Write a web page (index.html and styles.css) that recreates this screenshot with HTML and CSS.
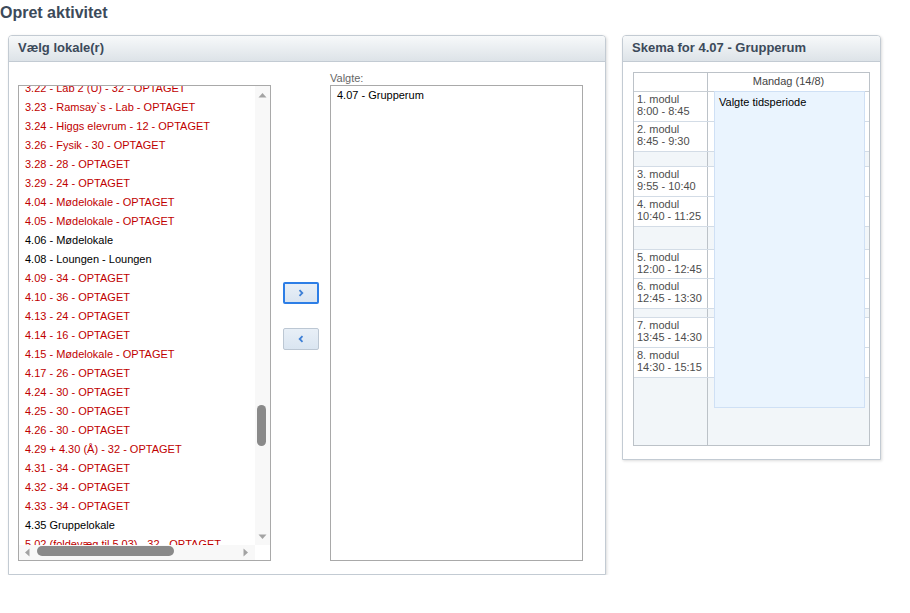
FILE: index.html
```html
<!DOCTYPE html>
<html lang="da">
<head>
<meta charset="utf-8">
<title>Opret aktivitet</title>
<link rel="stylesheet" href="styles.css">
</head>
<body>
<h1 class="page-title">Opret aktivitet</h1>
<div class="panels">
  <section class="panel panel-rooms">
    <header class="panel-head">Vælg lokale(r)</header>
    <div class="panel-body rooms-body">
      <div class="listbox listbox-all">
        <div class="list-view">
          <ul class="list-items list-scrolled">
            <li class="busy">3.22 - Lab 2 (U) - 32 - OPTAGET</li>
            <li class="busy">3.23 - Ramsay`s - Lab - OPTAGET</li>
            <li class="busy">3.24 - Higgs elevrum - 12 - OPTAGET</li>
            <li class="busy">3.26 - Fysik - 30 - OPTAGET</li>
            <li class="busy">3.28 - 28 - OPTAGET</li>
            <li class="busy">3.29 - 24 - OPTAGET</li>
            <li class="busy">4.04 - Mødelokale - OPTAGET</li>
            <li class="busy">4.05 - Mødelokale - OPTAGET</li>
            <li>4.06 - Mødelokale</li>
            <li>4.08 - Loungen - Loungen</li>
            <li class="busy">4.09 - 34 - OPTAGET</li>
            <li class="busy">4.10 - 36 - OPTAGET</li>
            <li class="busy">4.13 - 24 - OPTAGET</li>
            <li class="busy">4.14 - 16 - OPTAGET</li>
            <li class="busy">4.15 - Mødelokale - OPTAGET</li>
            <li class="busy">4.17 - 26 - OPTAGET</li>
            <li class="busy">4.24 - 30 - OPTAGET</li>
            <li class="busy">4.25 - 30 - OPTAGET</li>
            <li class="busy">4.26 - 30 - OPTAGET</li>
            <li class="busy">4.29 + 4.30 (Å) - 32 - OPTAGET</li>
            <li class="busy">4.31 - 34 - OPTAGET</li>
            <li class="busy">4.32 - 34 - OPTAGET</li>
            <li class="busy">4.33 - 34 - OPTAGET</li>
            <li>4.35 Gruppelokale</li>
            <li class="busy">5.02 (foldevæg til 5.03) - 32 - OPTAGET</li>
          </ul>
        </div>
        <div class="vscroll">
          <svg class="arrow" width="9" height="6" viewBox="0 0 9 6"><path d="M0.5 5.5 L4.5 1 L8.5 5.5 Z" fill="#a3a3a3"/></svg>
          <div class="vtrack"><div class="vthumb"></div></div>
          <svg class="arrow" width="9" height="6" viewBox="0 0 9 6"><path d="M0.5 0.5 L4.5 5 L8.5 0.5 Z" fill="#a3a3a3"/></svg>
        </div>
        <div class="hscroll">
          <svg class="arrow" width="6" height="9" viewBox="0 0 6 9"><path d="M5.5 0.5 L1 4.5 L5.5 8.5 Z" fill="#a3a3a3"/></svg>
          <div class="htrack"><div class="hthumb"></div></div>
          <svg class="arrow" width="6" height="9" viewBox="0 0 6 9"><path d="M0.5 0.5 L5 4.5 L0.5 8.5 Z" fill="#a3a3a3"/></svg>
        </div>
        <div class="corner"></div>
      </div>
      <div class="move-buttons">
        <button class="move-btn focused" type="button" aria-label="Tilføj">
          <svg width="6" height="8" viewBox="0 0 6 8"><path d="M1.5 1.2 L4.3 4 L1.5 6.8" fill="none" stroke="#3d7fd6" stroke-width="1.8"/></svg>
        </button>
        <button class="move-btn" type="button" aria-label="Fjern">
          <svg width="6" height="8" viewBox="0 0 6 8"><path d="M4.5 1.2 L1.7 4 L4.5 6.8" fill="none" stroke="#3d7fd6" stroke-width="1.8"/></svg>
        </button>
      </div>
      <div class="chosen">
        <label class="chosen-label">Valgte:</label>
        <div class="listbox listbox-chosen">
          <ul class="list-items">
            <li>4.07 - Grupperum</li>
          </ul>
        </div>
      </div>
    </div>
  </section>
  <section class="panel panel-schedule">
    <header class="panel-head">Skema for 4.07 - Grupperum</header>
    <div class="panel-body schedule-body">
      <div class="sched">
        <div class="srow shead"><div class="c1"></div><div class="c2">Mandag (14/8)</div></div>
        <div class="srow mod h30"><div class="c1">1. modul<br>8:00 - 8:45</div><div class="c2"></div></div>
        <div class="srow mod h30"><div class="c1">2. modul<br>8:45 - 9:30</div><div class="c2"></div></div>
        <div class="srow brk h15"><div class="c1"></div><div class="c2"></div></div>
        <div class="srow mod h30"><div class="c1">3. modul<br>9:55 - 10:40</div><div class="c2"></div></div>
        <div class="srow mod h30"><div class="c1">4. modul<br>10:40 - 11:25</div><div class="c2"></div></div>
        <div class="srow brk h23"><div class="c1"></div><div class="c2"></div></div>
        <div class="srow mod h29"><div class="c1">5. modul<br>12:00 - 12:45</div><div class="c2"></div></div>
        <div class="srow mod h30"><div class="c1">6. modul<br>12:45 - 13:30</div><div class="c2"></div></div>
        <div class="srow brk h9"><div class="c1"></div><div class="c2"></div></div>
        <div class="srow mod h30"><div class="c1">7. modul<br>13:45 - 14:30</div><div class="c2"></div></div>
        <div class="srow mod h30"><div class="c1">8. modul<br>14:30 - 15:15</div><div class="c2"></div></div>
        <div class="srow filler"><div class="c1"></div><div class="c2"></div></div>
        <div class="chosen-period">Valgte tidsperiode</div>
      </div>
    </div>
  </section>
</div>
</body>
</html>
```

FILE: styles.css
```css
* { box-sizing: border-box; }

html, body {
  margin: 0;
  padding: 0;
  background: #ffffff;
  font-family: "Liberation Sans", Arial, sans-serif;
  font-size: 11px;
  color: #000;
}

.page-title {
  margin: 0;
  height: 24px;
  line-height: 26px;
  font-size: 16px;
  font-weight: bold;
  color: #3c4a5a;
}

.panels {
  display: flex;
  align-items: flex-start;
  gap: 16px;
  margin-top: 11px;
  padding-left: 8px;
}

.panel {
  border: 1px solid #c3cbd3;
  border-radius: 4px 4px 0 0;
  background: #fff;
  box-shadow: 1px 1px 3px rgba(0, 0, 0, 0.14);
}

.panel-rooms { width: 598px; height: 540px; }
.panel-schedule { width: 259px; height: 425px; }

.panel-head {
  height: 26px;
  line-height: 24px;
  padding-left: 9px;
  font-size: 13px;
  font-weight: bold;
  color: #3c4a5a;
  background: linear-gradient(#f7f9fa, #dde3e8);
  border-bottom: 1px solid #c3cbd3;
  border-radius: 3px 3px 0 0;
}

.rooms-body {
  display: flex;
  padding: 10px 0 0 9px;
}

.listbox {
  border: 1px solid #a9a9a9;
  background: #fff;
  width: 253px;
  height: 476px;
}

.listbox-all {
  margin-top: 13px;
  display: grid;
  grid-template-columns: 1fr 15px;
  grid-template-rows: 1fr 15px;
  overflow: hidden;
}

.list-view {
  overflow: hidden;
}

.list-items {
  list-style: none;
  margin: 0;
  padding: 0 0 0 6px;
  white-space: nowrap;
}

.list-items li {
  height: 19px;
  line-height: 19px;
}

.list-scrolled { margin-top: -7px; }

.list-items li.busy { color: #c00000; }

.vscroll {
  background: #f8f8f8;
  display: flex;
  flex-direction: column;
  align-items: center;
  padding: 6px 0 5px;
}

.vtrack {
  flex: 1;
  width: 100%;
  position: relative;
}

.vthumb {
  position: absolute;
  left: 2px;
  top: 307px;
  width: 9px;
  height: 41px;
  border-radius: 5px;
  background: #8a8a8a;
}

.hscroll {
  background: #f8f8f8;
  display: flex;
  align-items: center;
  padding: 0 6px 0 5px;
}

.htrack {
  flex: 1;
  height: 100%;
  position: relative;
}

.hthumb {
  position: absolute;
  left: 7px;
  top: 1px;
  width: 137px;
  height: 10px;
  border-radius: 5px;
  background: #8a8a8a;
}

.corner { background: #fff; }

.arrow { display: block; flex: none; }

.move-buttons {
  width: 59px;
  display: flex;
  flex-direction: column;
  align-items: flex-start;
  gap: 24px;
  padding: 210px 0 0 12px;
}

.move-btn {
  width: 36px;
  height: 22px;
  padding: 0;
  margin: 0;
  border: 1px solid #bcc7d3;
  border-radius: 2px;
  background: linear-gradient(#e8eff7, #dae5f1);
  display: flex;
  align-items: center;
  justify-content: center;
}

.move-btn.focused {
  border: 2px solid #2d7ee6;
}

.chosen {
  display: flex;
  flex-direction: column;
}

.chosen-label {
  height: 13px;
  line-height: 13px;
  color: #666;
}

.listbox-chosen {
  padding-top: 0;
}

.listbox-chosen .list-items li {
  height: 18px;
  line-height: 18px;
}

.schedule-body {
  padding: 10px 10px 0 10px;
}

.sched {
  position: relative;
  width: 237px;
  height: 374px;
  border: 1px solid #bcc2c8;
  display: flex;
  flex-direction: column;
  background: #f2f6f9;
}

.srow {
  display: flex;
  flex: none;
  border-bottom: 1px solid #d3dce6;
}

.srow .c1 {
  width: 74px;
  border-right: 1px solid #bcc2c8;
  flex: none;
  color: #4d4d4d;
  font-size: 11px;
  line-height: 12px;
  padding: 1px 0 0 3px;
  white-space: nowrap;
}

.srow .c2 { flex: 1; }

.shead {
  height: 19px;
  background: #fff;
  border-bottom: 1px solid #c8ced4;
}

.shead .c2 {
  text-align: center;
  color: #444;
  line-height: 16px;
}

.mod { background: #fff; }
.brk { background: #f2f6f9; }

.h30 { height: 30px; }
.h29 { height: 29px; }
.h15 { height: 15px; }
.h23 { height: 23px; }
.h9 { height: 9px; }

.filler {
  flex: 1;
  border-bottom: none;
  background: #f2f6f9;
}

.chosen-period {
  position: absolute;
  left: 80px;
  top: 18px;
  width: 151px;
  height: 317px;
  background: #eaf4fe;
  border: 1px solid #cfe0f5;
  padding: 3px 0 0 4px;
  line-height: 14px;
  color: #000;
}
```
